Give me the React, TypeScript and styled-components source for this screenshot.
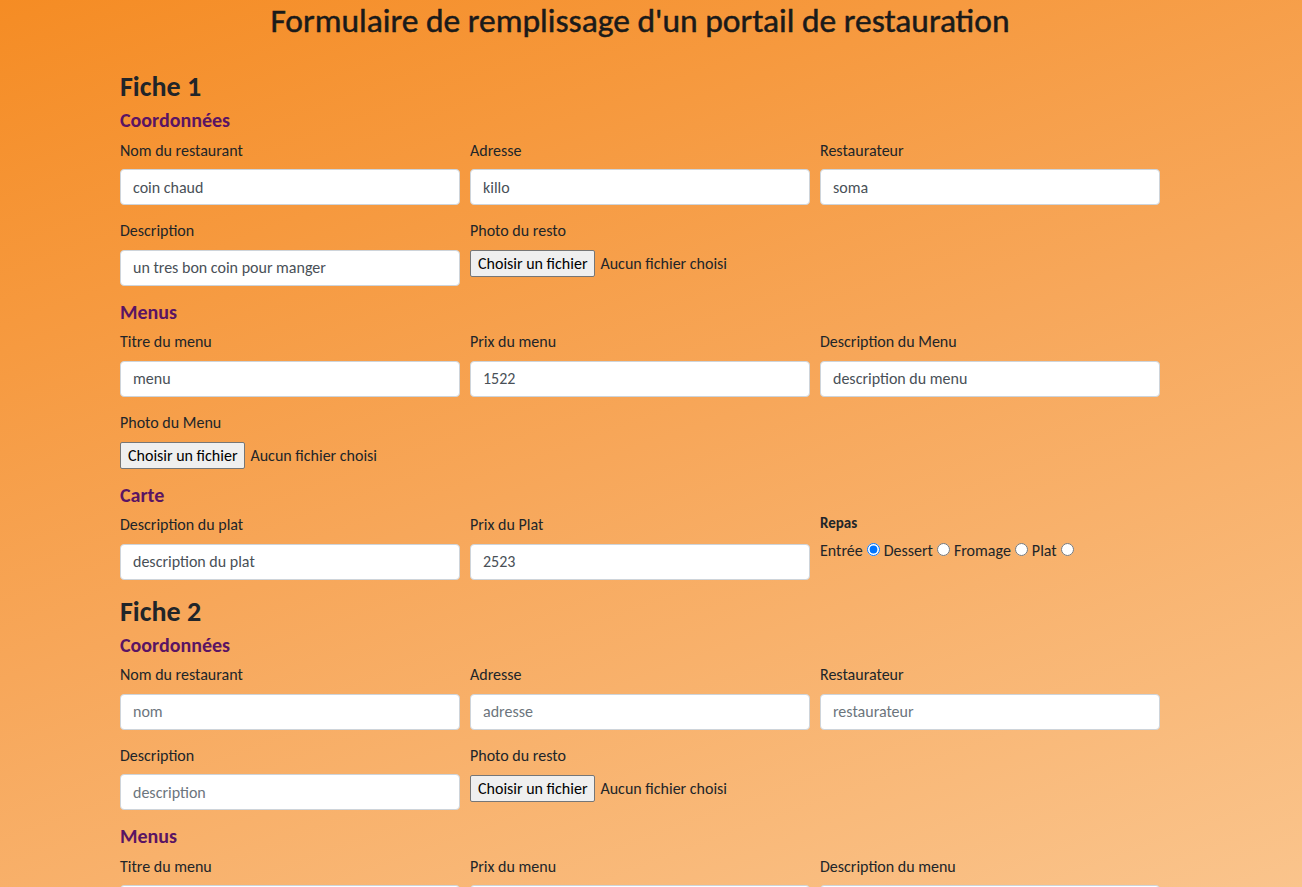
import React from "react";
import styled, { createGlobalStyle } from "styled-components";

const Global = createGlobalStyle`
  html {
    min-height: 100%;
    background: linear-gradient(160deg, #f58c24 0%, #f7a75a 50%, #fac48c 100%) fixed;
  }
  body {
    margin: 0;
    font-family: Carlito, Lato, "Open Sans", sans-serif;
    color: #212529;
  }
  * { box-sizing: border-box; }
`;

const Page = styled.main`
  width: 1040px;
  margin-left: 120px;
  padding-bottom: 40px;
`;

const Title = styled.h1`
  margin: 0 0 28px;
  font-size: 33.5px;
  line-height: 42px;
  font-weight: 500;
  -webkit-text-stroke: 0.5px #1a1a1a;
  text-align: center;
  color: #1a1a1a;
`;

const FicheTitle = styled.h2`
  margin: 0 0 5px;
  font-size: 28px;
  line-height: 34px;
  font-weight: 700;
  color: #212529;
`;

const SectionTitle = styled.h3`
  margin: 0 0 8.5px;
  font-size: 20px;
  line-height: 22px;
  font-weight: 700;
  color: #5a1463;
`;

const Grid = styled.div`
  display: grid;
  grid-template-columns: repeat(3, 340px);
  column-gap: 10px;
  align-items: start;
`;

const Field = styled.div`
  display: flex;
  flex-direction: column;
  align-items: flex-start;
  margin-bottom: 15px;
`;

const Label = styled.label<{ $bold?: boolean }>`
  display: block;
  margin-bottom: ${(p) => (p.$bold ? "8px" : "7.5px")};
  font-size: ${(p) => (p.$bold ? "15px" : "16px")};
  line-height: ${(p) => (p.$bold ? "18px" : "22px")};
  font-weight: ${(p) => (p.$bold ? 700 : 400)};
  color: #212529;
`;

const Input = styled.input`
  width: 340px;
  height: 36px;
  padding: 0 12px;
  border: 1px solid #ced4da;
  border-radius: 4px;
  background: #fff;
  font-family: inherit;
  font-size: 16px;
  color: #495057;
  outline: none;
  &::placeholder {
    color: #6c757d;
  }
`;

const FileRow = styled.div`
  display: flex;
  align-items: center;
  gap: 5px;
  height: 27px;
  margin-top: 0.5px;
  font-size: 16px;
  color: #212529;
`;

const FileButton = styled.button`
  height: 27px;
  padding: 0 7px;
  border: 1px solid #767676;
  border-radius: 2px;
  background: #efefef;
  font-family: inherit;
  font-size: 16px;
  color: #000;
`;

const RadioRow = styled.div`
  display: flex;
  align-items: center;
  font-size: 16px;
  line-height: 22px;
  color: #212529;
`;

const Radio = styled.input`
  width: 13px;
  height: 13px;
  margin: 0 4px 3px 4px;
`;

type F = { label: string; value?: string; placeholder?: string };

const TextField = ({ label, value, placeholder }: F) => (
  <Field>
    <Label>{label}</Label>
    <Input defaultValue={value} placeholder={placeholder} />
  </Field>
);

const FileField = ({ label }: { label: string }) => (
  <Field>
    <Label>{label}</Label>
    <FileRow>
      <FileButton type="button">Choisir un fichier</FileButton>
      <span>Aucun fichier choisi</span>
    </FileRow>
  </Field>
);

const Repas = ({ name }: { name: string }) => (
  <Field>
    <Label $bold>Repas</Label>
    <RadioRow>
      Entrée
      <Radio type="radio" name={name} defaultChecked />
      Dessert
      <Radio type="radio" name={name} />
      Fromage
      <Radio type="radio" name={name} />
      Plat
      <Radio type="radio" name={name} />
    </RadioRow>
  </Field>
);

type FicheData = {
  n: number;
  filled: boolean;
};

const Fiche = ({ n, filled }: FicheData) => {
  const v = (a: string, b: string) => (filled ? { value: a } : { placeholder: b });
  return (
    <section>
      <FicheTitle>Fiche {n}</FicheTitle>
      <SectionTitle>Coordonnées</SectionTitle>
      <Grid>
        <TextField label="Nom du restaurant" {...v("coin chaud", "nom")} />
        <TextField label="Adresse" {...v("killo", "adresse")} />
        <TextField label="Restaurateur" {...v("soma", "restaurateur")} />
        <TextField label="Description" {...v("un tres bon coin pour manger", "description")} />
        <FileField label="Photo du resto" />
      </Grid>
      <SectionTitle>Menus</SectionTitle>
      <Grid>
        <TextField label="Titre du menu" {...v("menu", "titre")} />
        <TextField label="Prix du menu" {...v("1522", "prix")} />
        <TextField
          label={filled ? "Description du Menu" : "Description du menu"}
          {...v("description du menu", "description")}
        />
        <FileField label="Photo du Menu" />
      </Grid>
      <SectionTitle>Carte</SectionTitle>
      <Grid>
        <TextField label="Description du plat" {...v("description du plat", "description")} />
        <TextField label="Prix du Plat" {...v("2523", "prix")} />
        <Repas name={`repas${n}`} />
      </Grid>
    </section>
  );
};

export default function App() {
  return (
    <>
      <Global />
      <Page>
        <Title>Formulaire de remplissage d'un portail de restauration</Title>
        <Fiche n={1} filled />
        <Fiche n={2} filled={false} />
      </Page>
    </>
  );
}
